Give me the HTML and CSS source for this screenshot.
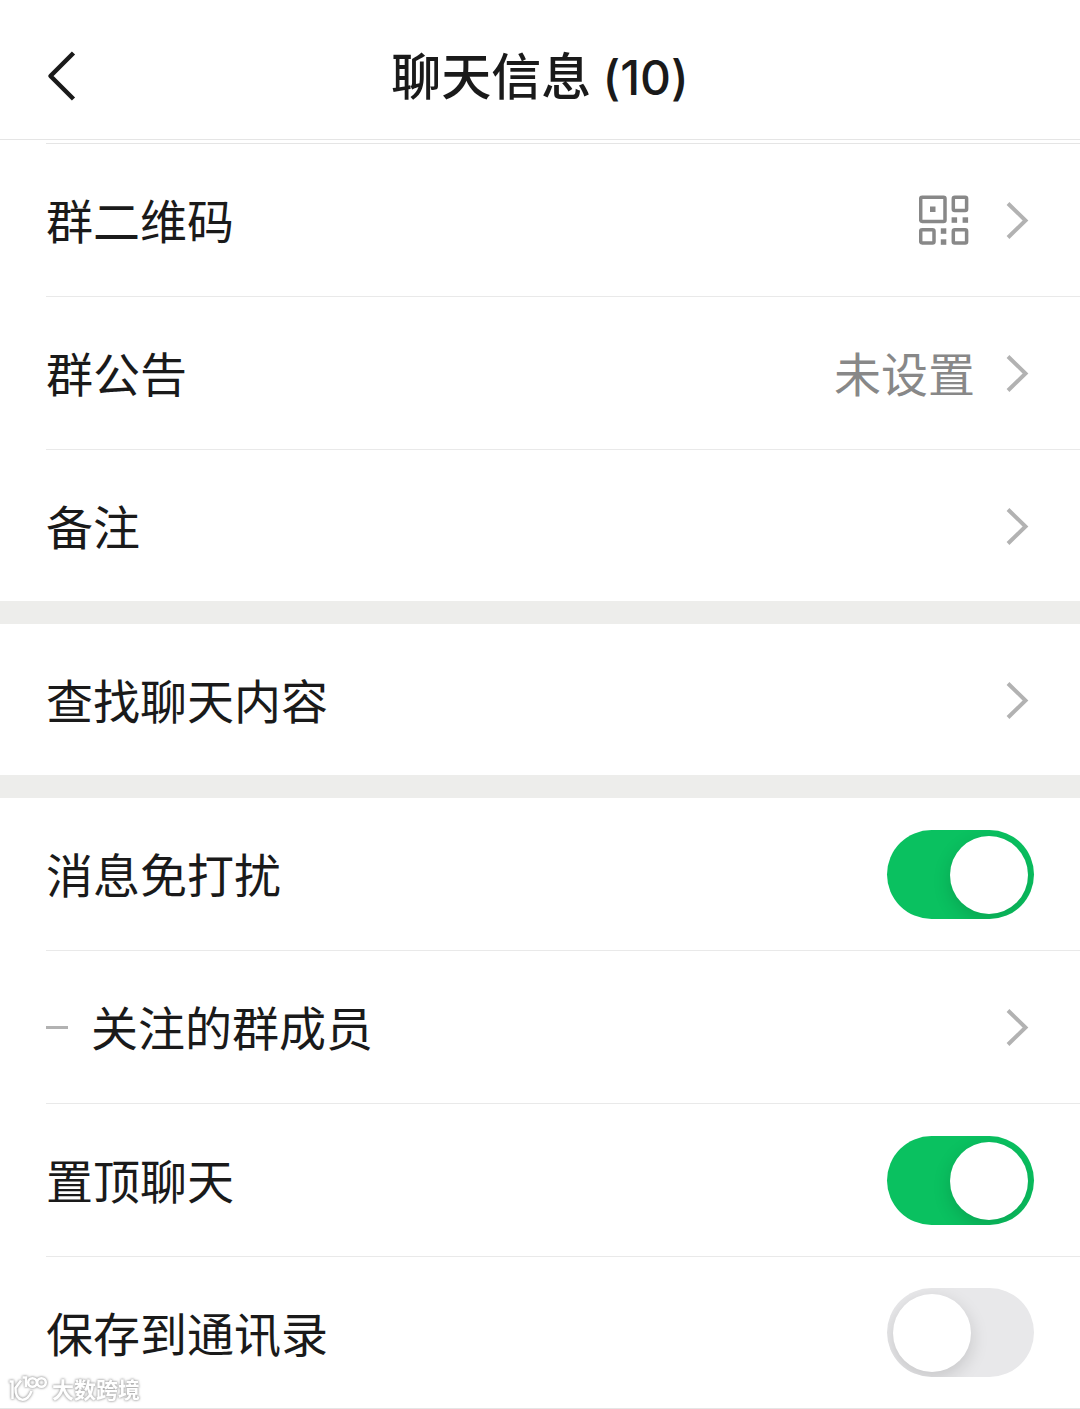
FILE: index.html
```html
<!DOCTYPE html>
<html lang="zh-CN">

<head>
    <meta charset="UTF-8">
    <meta name="viewport" content="width=device-width, initial-scale=1.0">
    <title>聊天信息</title>
    <link rel="stylesheet" href="styles.css">
</head>

<body>

    <!-- shared arrow -->
    <svg class="defs" aria-hidden="true">
        <symbol id="arrow" viewBox="0 0 28 40">
            <path d="M2 3.500 L19.500 20.500 L2 37.500" fill="none" stroke="#b2b2b2" stroke-width="4" />
        </symbol>
    </svg>

    <header class="header">
        <button class="back" type="button" aria-label="返回">
            <svg viewBox="0 0 30 50">
                <path d="M27.500 2 L4.500 25 L27.500 48" fill="none" stroke="#1a1a1a" stroke-width="4.500" stroke-linejoin="round" />
            </svg>
        </button>
        <h1>聊天信息 <span class="count">(10)</span></h1>
    </header>

    <main>
        <section class="group first">
            <a class="row" href="#qrcode">
                <span class="label">群二维码</span>
                <svg class="qr" viewBox="0 0 56 50" aria-hidden="true">
                    <g fill="none" stroke="#888" stroke-width="3.500">
                        <rect x="1.700" y="2.200" width="24.300" height="24.300" rx="1.500" />
                        <rect x="34.300" y="2.200" width="13.300" height="13.300" rx="1.500" />
                        <rect x="1.700" y="34.800" width="13.300" height="13.300" rx="1.500" />
                        <rect x="34.300" y="34.800" width="13.300" height="13.300" rx="1.500" />
                    </g>
                    <g fill="#888">
                        <rect x="11" y="11.500" width="5.500" height="5.500" />
                        <rect x="32.600" y="22.300" width="5.500" height="5.500" />
                        <rect x="43.600" y="22.300" width="5.500" height="5.500" />
                        <rect x="21.800" y="33.300" width="5.500" height="5.500" />
                        <rect x="21.800" y="44.300" width="5.500" height="5.500" />
                    </g>
                </svg>
                <svg class="arrow" aria-hidden="true"><use href="#arrow" /></svg>
            </a>
            <a class="row" href="#notice">
                <span class="label">群公告</span>
                <span class="value">未设置</span>
                <svg class="arrow" aria-hidden="true"><use href="#arrow" /></svg>
            </a>
            <a class="row" href="#remark">
                <span class="label">备注</span>
                <svg class="arrow" aria-hidden="true"><use href="#arrow" /></svg>
            </a>
        </section>

        <section class="group">
            <a class="row" href="#search">
                <span class="label">查找聊天内容</span>
                <svg class="arrow" aria-hidden="true"><use href="#arrow" /></svg>
            </a>
        </section>

        <section class="group last">
            <div class="row">
                <label class="label" for="mute">消息免打扰</label>
                <input class="switch" type="checkbox" id="mute" checked>
            </div>
            <a class="row sub" href="#members">
                <span class="label">关注的群成员</span>
                <svg class="arrow" aria-hidden="true"><use href="#arrow" /></svg>
            </a>
            <div class="row">
                <label class="label" for="top">置顶聊天</label>
                <input class="switch" type="checkbox" id="top" checked>
            </div>
            <div class="row">
                <label class="label" for="save">保存到通讯录</label>
                <input class="switch" type="checkbox" id="save">
            </div>
        </section>
    </main>

    <div class="watermark">
        <svg viewBox="0 0 40 30" aria-hidden="true">
            <g fill="none" stroke="#fff" stroke-width="2.500">
                <path d="M1.500 6.500 H4.500 V24" />
                <path d="M13 5.500 L7.500 13 C7 28 20 28 23.500 16" />
                <path d="M14.500 2.500 H18 V12" />
                <circle cx="24.500" cy="7.500" r="4.300" />
                <circle cx="33.500" cy="7.500" r="4.300" />
            </g>
        </svg>
        <span>大数跨境</span>
    </div>

</body>

</html>
```
FILE: styles.css
```css
* {
    box-sizing: border-box;
}

body {
    margin: 0;
    position: relative;
    font-family: "Noto Sans CJK SC", sans-serif;
    color: #1a1a1a;
    background-color: #ededeb;
}

.defs {
    display: none;
}

.header {
    display: grid;
    grid-template-columns: 80px 1fr 80px;
    align-items: center;
    height: 140px;
    padding-top: 12px;
    background-color: #fff;
    border-bottom: 1px solid #e5e5e5;
}

.header h1 {
    margin: 0;
    font-size: 50px;
    font-weight: 500;
    line-height: 60px;
    text-align: center;
}

.count {
    font-family: Inter, sans-serif;
    font-size: 48px;
    font-variant-ligatures: no-contextual;
}

.back {
    height: 50px;
    padding: 0 0 0 46px;
    border: none;
    background: none;
    cursor: pointer;
}

.back svg {
    display: block;
    width: 30px;
    height: 50px;
}

.group {
    margin-bottom: 23px;
    padding-left: 46px;
    background-color: #fff;
}

.first {
    padding-top: 3px;
}

.first .row:first-child {
    height: 154px;
    border-top: 1px solid #e5e5e5;
}

.last {
    margin-bottom: 0;
    border-bottom: 1px solid #e5e5e5;
}

.row {
    display: flex;
    align-items: center;
    height: 153px;
    padding-right: 46px;
    border-bottom: 1px solid #e9e9e9;
    color: inherit;
    text-decoration: none;
}

.row:last-child {
    height: 151px;
    border-bottom: none;
}

.label,
.value {
    padding-bottom: 2px;
    font-size: 47px;
    line-height: 60px;
}

.label {
    flex: 1;
}

.sub::before {
    content: "";
    width: 22px;
    height: 3px;
    margin-right: 23px;
    background-color: #b2b2b2;
}

.value {
    margin-right: 31px;
    color: #888;
}

.qr {
    width: 56px;
    height: 50px;
    margin-right: 31px;
}

.arrow {
    width: 28px;
    height: 40px;
}

.switch {
    appearance: none;
    width: 147px;
    height: 89px;
    margin: 0;
    padding: 6px;
    border-radius: 45px;
    background-color: #e8e8ea;
    overflow: hidden;
    cursor: pointer;
}

.switch::before {
    content: "";
    display: block;
    width: 78px;
    height: 78px;
    border-radius: 50%;
    background-color: #fff;
    box-shadow: 0 6px 18px rgba(0, 0, 0, 0.15);
}

.switch:checked {
    background-color: #0ac160;
}

.switch:checked::before {
    margin-left: auto;
}

.watermark {
    position: absolute;
    left: 8px;
    bottom: 4px;
    display: flex;
    gap: 4px;
    font-size: 22px;
    font-weight: 700;
    line-height: 26px;
    color: #fff;
    filter: drop-shadow(0 0 1px #aaa) drop-shadow(0 0 1px #bbb);
}

.watermark svg {
    width: 40px;
    height: 30px;
}
```
